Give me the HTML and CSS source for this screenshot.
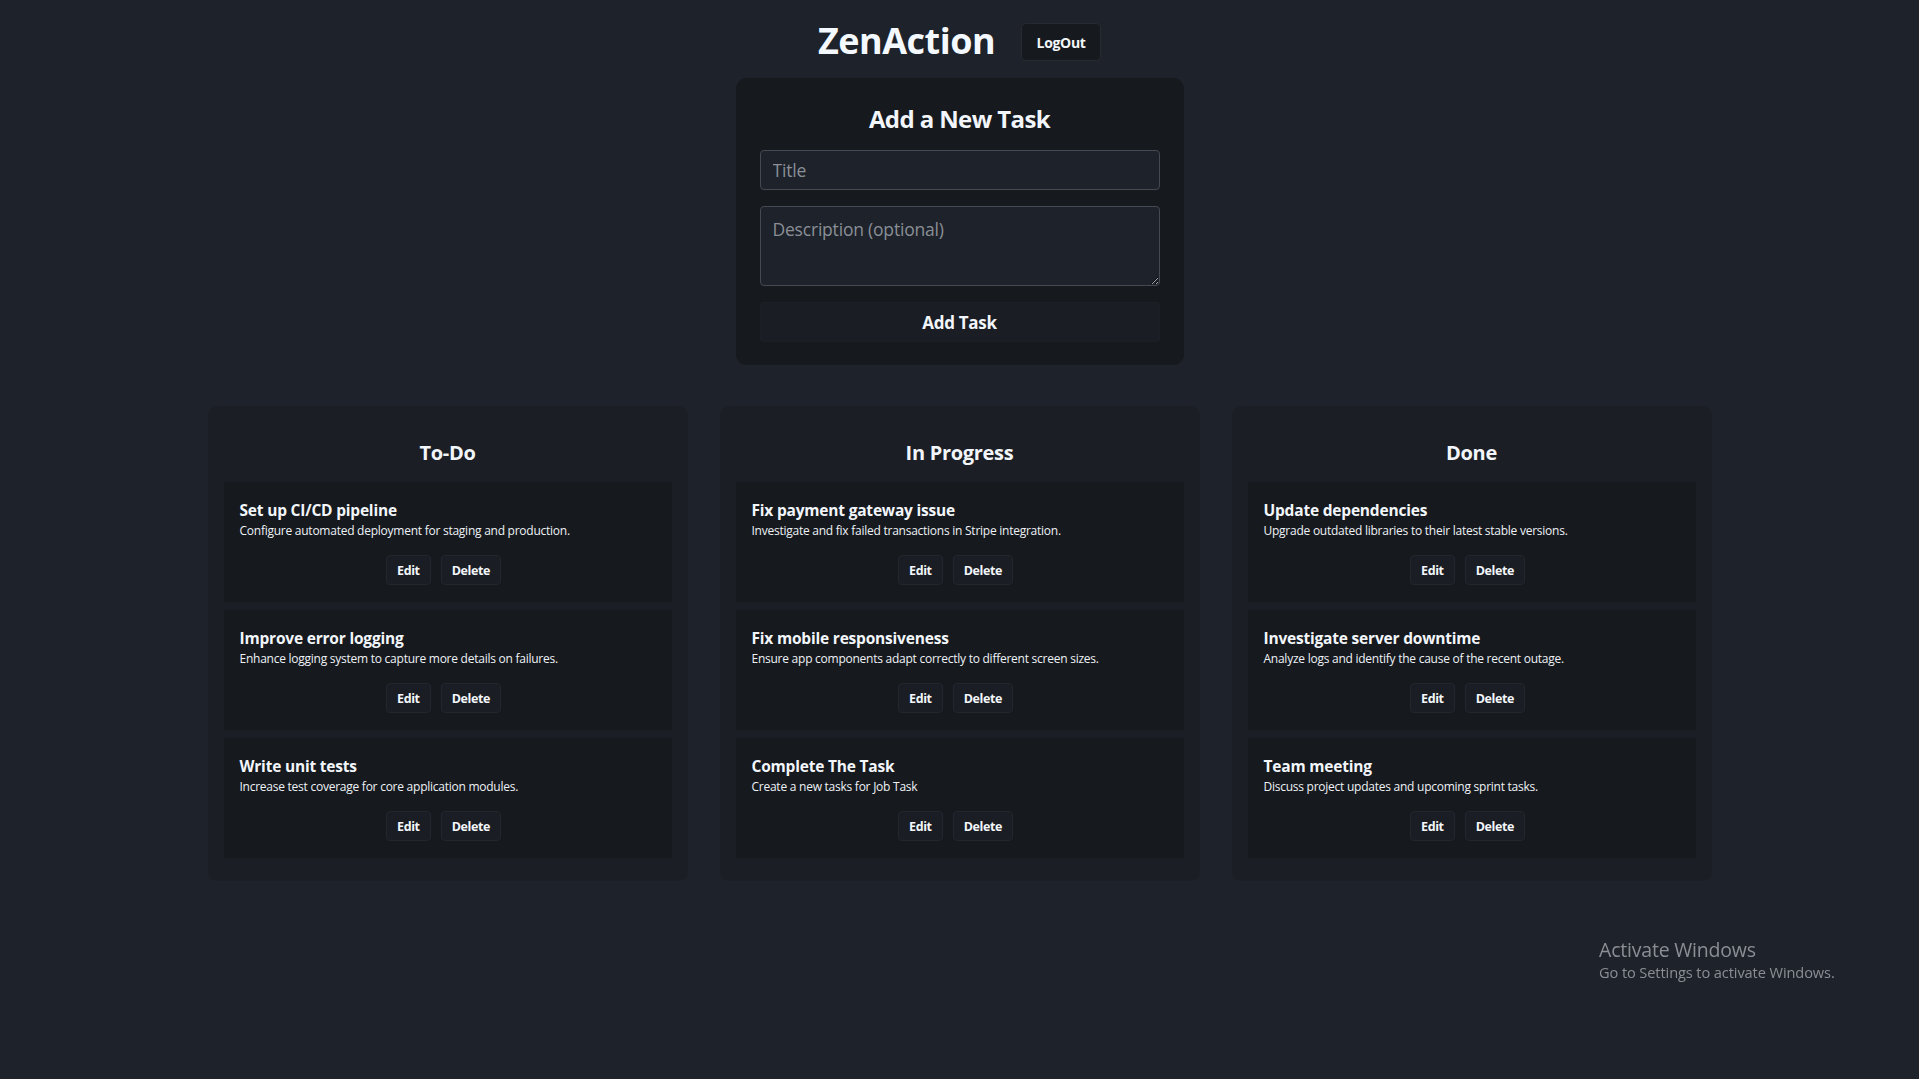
FILE: index.html
```html
<!DOCTYPE html>
<html lang="en">
<head>
<meta charset="utf-8">
<title>ZenAction</title>
<link rel="stylesheet" href="styles.css">
</head>
<body>
<header class="topbar">
  <h1 class="brand">ZenAction</h1>
  <button class="logout" type="button">LogOut</button>
</header>

<main class="page">
  <section class="form-card">
    <h2 class="form-title">Add a New Task</h2>
    <input class="field field-title" type="text" placeholder="Title">
    <textarea class="field field-desc" placeholder="Description (optional)"></textarea>
    <button class="add-btn" type="button">Add Task</button>
  </section>

  <div class="columns">
    <section class="column">
      <h3 class="column-title">To-Do</h3>
      <div class="task">
        <h4 class="task-title">Set up CI/CD pipeline</h4>
        <p class="task-desc">Configure automated deployment for staging and production.</p>
        <div class="task-actions"><button class="task-btn" type="button">Edit</button><button class="task-btn" type="button">Delete</button></div>
      </div>
      <div class="task">
        <h4 class="task-title">Improve error logging</h4>
        <p class="task-desc">Enhance logging system to capture more details on failures.</p>
        <div class="task-actions"><button class="task-btn" type="button">Edit</button><button class="task-btn" type="button">Delete</button></div>
      </div>
      <div class="task">
        <h4 class="task-title">Write unit tests</h4>
        <p class="task-desc">Increase test coverage for core application modules.</p>
        <div class="task-actions"><button class="task-btn" type="button">Edit</button><button class="task-btn" type="button">Delete</button></div>
      </div>
    </section>

    <section class="column">
      <h3 class="column-title">In Progress</h3>
      <div class="task">
        <h4 class="task-title">Fix payment gateway issue</h4>
        <p class="task-desc">Investigate and fix failed transactions in Stripe integration.</p>
        <div class="task-actions"><button class="task-btn" type="button">Edit</button><button class="task-btn" type="button">Delete</button></div>
      </div>
      <div class="task">
        <h4 class="task-title">Fix mobile responsiveness</h4>
        <p class="task-desc">Ensure app components adapt correctly to different screen sizes.</p>
        <div class="task-actions"><button class="task-btn" type="button">Edit</button><button class="task-btn" type="button">Delete</button></div>
      </div>
      <div class="task">
        <h4 class="task-title">Complete The Task</h4>
        <p class="task-desc">Create a new tasks for Job Task</p>
        <div class="task-actions"><button class="task-btn" type="button">Edit</button><button class="task-btn" type="button">Delete</button></div>
      </div>
    </section>

    <section class="column">
      <h3 class="column-title">Done</h3>
      <div class="task">
        <h4 class="task-title">Update dependencies</h4>
        <p class="task-desc">Upgrade outdated libraries to their latest stable versions.</p>
        <div class="task-actions"><button class="task-btn" type="button">Edit</button><button class="task-btn" type="button">Delete</button></div>
      </div>
      <div class="task">
        <h4 class="task-title">Investigate server downtime</h4>
        <p class="task-desc">Analyze logs and identify the cause of the recent outage.</p>
        <div class="task-actions"><button class="task-btn" type="button">Edit</button><button class="task-btn" type="button">Delete</button></div>
      </div>
      <div class="task">
        <h4 class="task-title">Team meeting</h4>
        <p class="task-desc">Discuss project updates and upcoming sprint tasks.</p>
        <div class="task-actions"><button class="task-btn" type="button">Edit</button><button class="task-btn" type="button">Delete</button></div>
      </div>
    </section>
  </div>
</main>

<div class="watermark">
  <div class="wm-title">Activate Windows</div>
  <div class="wm-sub">Go to Settings to activate Windows.</div>
</div>
</body>
</html>
```

FILE: styles.css
```css
* {
  box-sizing: border-box;
}

html, body {
  margin: 0;
  padding: 0;
}

body {
  background: #1e222a;
  color: #f2f6fa;
  font-family: "Open Sans", "Noto Sans", "Liberation Sans", sans-serif;
  min-height: 1079px;
}

.topbar {
  display: flex;
  justify-content: center;
  align-items: flex-start;
  gap: 26px;
  padding-top: 19px;
}

.brand {
  margin: 2px 0 0;
  font-size: 36px;
  line-height: 40px;
  font-weight: 700;
  letter-spacing: -0.5px;
  color: #f4f9ff;
}

.logout {
  margin-top: 4px;
  height: 38px;
  width: 80px;
  padding: 0;
  background: #16191e;
  border: 1px solid #262a31;
  border-radius: 5px;
  color: #f2f6fa;
  font-family: inherit;
  font-size: 14px;
  font-weight: 700;
  letter-spacing: -0.3px;
}

.page {
  display: flex;
  flex-direction: column;
  align-items: center;
}

.form-card {
  margin-top: 17px;
  width: 448px;
  background: #16191e;
  border-radius: 11px;
  padding: 24px 24px 23px;
  display: flex;
  flex-direction: column;
}

.form-title {
  margin: 2px 0 16px;
  text-align: center;
  font-size: 24px;
  line-height: 30px;
  font-weight: 700;
  letter-spacing: -0.6px;
}

.field {
  display: block;
  width: 100%;
  background: #1e222a;
  border: 1px solid #454a52;
  border-radius: 4px;
  color: #e8edf2;
  font-family: inherit;
  font-size: 17.5px;
  letter-spacing: -0.2px;
  padding: 0 12px;
}

.field::placeholder {
  color: #8a8f97;
}

.field-title {
  height: 40px;
}

.field-desc {
  margin-top: 16px;
  height: 80px;
  padding-top: 10px;
  resize: vertical;
}

.add-btn {
  margin-top: 16px;
  height: 40px;
  width: 100%;
  background: #1a1d23;
  border: 1px solid #1c2026;
  border-radius: 3px;
  color: #f2f6fa;
  font-family: inherit;
  font-size: 17px;
  font-weight: 700;
  letter-spacing: -0.3px;
}

.columns {
  margin-top: 41px;
  display: grid;
  grid-template-columns: repeat(3, 480px);
  gap: 32px;
  justify-content: center;
}

.column {
  background: #1b1e25;
  border-radius: 10px;
  padding: 16px 16px 15px;
}

.column-title {
  margin: 19px 0 17px;
  text-align: center;
  font-size: 20px;
  line-height: 24px;
  font-weight: 700;
  letter-spacing: -0.3px;
}

.task {
  background: #16191e;
  padding: 18px 16px 17px;
  margin-bottom: 8px;
}

.task-title {
  margin: 0;
  font-size: 15.5px;
  line-height: 20px;
  font-weight: 700;
  letter-spacing: -0.2px;
}

.task-desc {
  margin: 2px 0 0;
  font-size: 12px;
  line-height: 17px;
  letter-spacing: -0.25px;
  color: #eef2f6;
}

.task-actions {
  margin-top: 16px;
  display: flex;
  justify-content: center;
  gap: 10px;
  padding-right: 8px;
}

.task-btn {
  height: 30px;
  padding: 0 10px;
  background: #1a1d23;
  border: 1px solid #22262d;
  border-radius: 4px;
  color: #f2f6fa;
  font-family: inherit;
  font-size: 12.5px;
  font-weight: 700;
  letter-spacing: -0.4px;
}

.watermark {
  position: fixed;
  left: 1599px;
  top: 937px;
  color: #8b8f95;
  font-family: "Open Sans", "Noto Sans", sans-serif;
}

.wm-title {
  font-size: 19.5px;
  line-height: 26px;
  letter-spacing: -0.2px;
}

.wm-sub {
  font-size: 14.6px;
  line-height: 19px;
  letter-spacing: -0.1px;
}
```
